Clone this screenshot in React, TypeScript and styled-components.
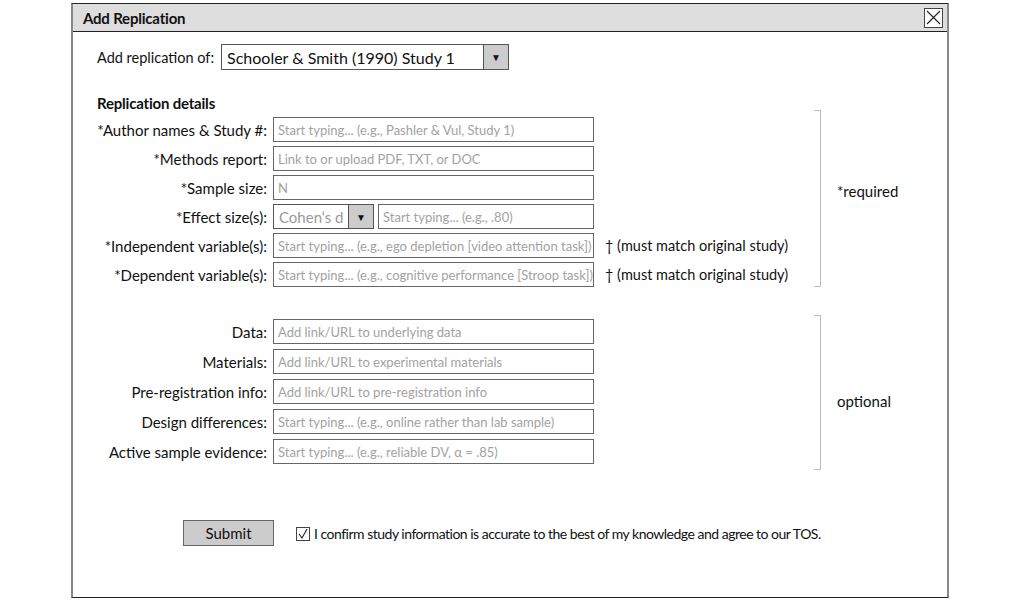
import React from "react";
import styled, { createGlobalStyle } from "styled-components";

const Global = createGlobalStyle`
  html, body { margin: 0; padding: 0; background: #fff; }
  body { font-family: Lato, "Open Sans", sans-serif; color: #111; }
  * { box-sizing: border-box; }
`;

const Page = styled.div`
  width: 1026px;
  height: 600px;
  padding: 3px 0 0 71px;
`;

const Window = styled.div`
  width: 878px;
  height: 595px;
  border-top: 1.5px solid #222;
  border-bottom: 1.5px solid #222;
  border-left: 2px solid #888;
  border-right: 2px solid #888;
  display: flex;
  flex-direction: column;
`;

const TitleBar = styled.div`
  height: 28px;
  background: #dddddd;
  border-bottom: 1.5px solid #222;
  display: flex;
  align-items: center;
  justify-content: space-between;
  padding: 0 4px 0 10px;
`;

const Title = styled.div`
  font-weight: 700;
  font-size: 15px;
  letter-spacing: -0.2px;
`;

const CloseBox = styled.div`
  width: 19px;
  height: 20px;
  border: 1.5px solid #444;
  background: #fff;
  display: flex;
  align-items: center;
  justify-content: center;
`;

const Body = styled.div`
  padding: 12px 0 0 24px;
  display: flex;
  flex-direction: column;
`;

const TopRow = styled.div`
  display: flex;
  align-items: center;
  gap: 7px;
  font-size: 14.5px;
`;

const Select = styled.div<{ $w: number; $h: number; $muted?: boolean; $fs: number }>`
  width: ${(p) => p.$w}px;
  height: ${(p) => p.$h}px;
  border: 1px solid #555;
  display: flex;
  align-items: stretch;
  background: #fff;
  font-size: ${(p) => p.$fs}px;
  color: ${(p) => (p.$muted ? "#999" : "#111")};
`;

const SelectText = styled.div`
  flex: 1;
  display: flex;
  align-items: center;
  padding-left: 5px;
  white-space: nowrap;
  overflow: hidden;
`;

const SelectArrow = styled.div`
  width: 25px;
  background: #cccccc;
  border-left: 1px solid #555;
  display: flex;
  align-items: center;
  justify-content: center;
  color: #111;
  font-size: 10px;
`;

const Heading = styled.div`
  margin-top: 26px;
  font-weight: 700;
  font-size: 15px;
  letter-spacing: -0.2px;
  height: 15px;
  line-height: 15px;
`;

const Section = styled.div<{ $mt: number }>`
  margin-top: ${(p) => p.$mt}px;
  display: flex;
  align-items: stretch;
`;

const Rows = styled.div<{ $pt: number; $pb: number; $gap: number }>`
  width: 717px;
  padding: ${(p) => p.$pt}px 0 ${(p) => p.$pb}px 0;
  display: grid;
  grid-template-columns: 170px 321px 1fr;
  column-gap: 6px;
  grid-auto-rows: 25px;
  row-gap: ${(p) => p.$gap}px;
`;

const Label = styled.div`
  font-size: 15px;
  text-align: right;
  white-space: nowrap;
  display: flex;
  align-items: center;
  justify-content: flex-end;
`;

const Field = styled.div<{ $grow?: boolean }>`
  ${(p) => (p.$grow ? "flex: 1;" : "")}
  border: 1px solid #666;
  background: #fff;
  display: flex;
  align-items: center;
  padding-left: 4px;
  font-size: 13px;
  color: #a2a2a2;
  white-space: nowrap;
  overflow: hidden;
`;

const SplitField = styled.div`
  display: flex;
  gap: 4px;
`;

const Note = styled.div`
  font-size: 14.5px;
  padding-left: 5px;
  display: flex;
  align-items: center;
  white-space: nowrap;
`;

const Bracket = styled.div`
  width: 7px;
  border: 1.5px solid #bbb;
  border-left: none;
`;

const SideLabel = styled.div<{ $shift: number }>`
  margin-left: 16px;
  font-size: 15px;
  display: flex;
  align-items: center;
  padding-top: ${(p) => Math.max(0, p.$shift * 2)}px;
  padding-bottom: ${(p) => Math.max(0, -p.$shift * 2)}px;
`;

const Footer = styled.div`
  margin-top: 50px;
  padding-left: 86px;
  display: flex;
  align-items: center;
  gap: 22px;
`;

const SubmitButton = styled.button`
  width: 91px;
  height: 26px;
  background: #cccccc;
  border: 1px solid #666;
  font-family: inherit;
  font-size: 15px;
  color: #111;
  padding: 0;
`;

const Confirm = styled.label`
  display: flex;
  align-items: center;
  gap: 4px;
  font-size: 14px;
  letter-spacing: -0.5px;
`;

const CheckBox = styled.span`
  width: 14px;
  height: 14px;
  border: 1px solid #444;
  display: inline-flex;
  align-items: center;
  justify-content: center;
  margin-top: 1px;
`;

const requiredRows: { label: string; ph?: string; note?: string; effect?: boolean }[] = [
  { label: "*Author names & Study #:", ph: "Start typing... (e.g., Pashler & Vul, Study 1)" },
  { label: "*Methods report:", ph: "Link to or upload PDF, TXT, or DOC" },
  { label: "*Sample size:", ph: "N" },
  { label: "*Effect size(s):", effect: true },
  {
    label: "*Independent variable(s):",
    ph: "Start typing... (e.g., ego depletion [video attention task])",
    note: "† (must match original study)",
  },
  {
    label: "*Dependent variable(s):",
    ph: "Start typing... (e.g., cognitive performance [Stroop task])",
    note: "† (must match original study)",
  },
];

const optionalRows = [
  { label: "Data:", ph: "Add link/URL to underlying data" },
  { label: "Materials:", ph: "Add link/URL to experimental materials" },
  { label: "Pre-registration info:", ph: "Add link/URL to pre-registration info" },
  { label: "Design differences:", ph: "Start typing... (e.g., online rather than lab sample)" },
  { label: "Active sample evidence:", ph: "Start typing... (e.g., reliable DV, α = .85)" },
];

export default function App() {
  return (
    <>
      <Global />
      <Page>
        <Window>
          <TitleBar>
            <Title>Add Replication</Title>
            <CloseBox>
              <svg width="15" height="15" viewBox="0 0 15 15">
                <path d="M1 1 L14 14 M14 1 L1 14" stroke="#222" strokeWidth="1.1" />
              </svg>
            </CloseBox>
          </TitleBar>
          <Body>
            <TopRow>
              <span>Add replication of:</span>
              <Select $w={288} $h={26} $fs={16}>
                <SelectText>Schooler &amp; Smith (1990) Study 1</SelectText>
                <SelectArrow>▼</SelectArrow>
              </Select>
            </TopRow>
            <Heading>Replication details</Heading>
            <Section $mt={-1}>
              <Rows $pt={7} $pb={0} $gap={4}>
                {requiredRows.map((r) => (
                  <React.Fragment key={r.label}>
                    <Label>{r.label}</Label>
                    {r.effect ? (
                      <SplitField>
                        <Select $w={101} $h={25} $fs={15} $muted>
                          <SelectText>Cohen‘s d</SelectText>
                          <SelectArrow>▼</SelectArrow>
                        </Select>
                        <Field $grow>Start typing... (e.g., .80)</Field>
                      </SplitField>
                    ) : (
                      <Field>{r.ph}</Field>
                    )}
                    <Note>{r.note ?? ""}</Note>
                  </React.Fragment>
                ))}
              </Rows>
              <Bracket />
              <SideLabel $shift={-8}>*required</SideLabel>
            </Section>
            <Section $mt={28}>
              <Rows $pt={4} $pb={6} $gap={5}>
                {optionalRows.map((r) => (
                  <React.Fragment key={r.label}>
                    <Label>{r.label}</Label>
                    <Field>{r.ph}</Field>
                    <Note />
                  </React.Fragment>
                ))}
              </Rows>
              <Bracket />
              <SideLabel $shift={8}>optional</SideLabel>
            </Section>
            <Footer>
              <SubmitButton>Submit</SubmitButton>
              <Confirm>
                <CheckBox>
                  <svg width="12" height="12" viewBox="0 0 12 12">
                    <path d="M2 6 L5 10 L10 1" stroke="#222" strokeWidth="1.1" fill="none" />
                  </svg>
                </CheckBox>
                I confirm study information is accurate to the best of my knowledge and agree to our TOS.
              </Confirm>
            </Footer>
          </Body>
        </Window>
      </Page>
    </>
  );
}
